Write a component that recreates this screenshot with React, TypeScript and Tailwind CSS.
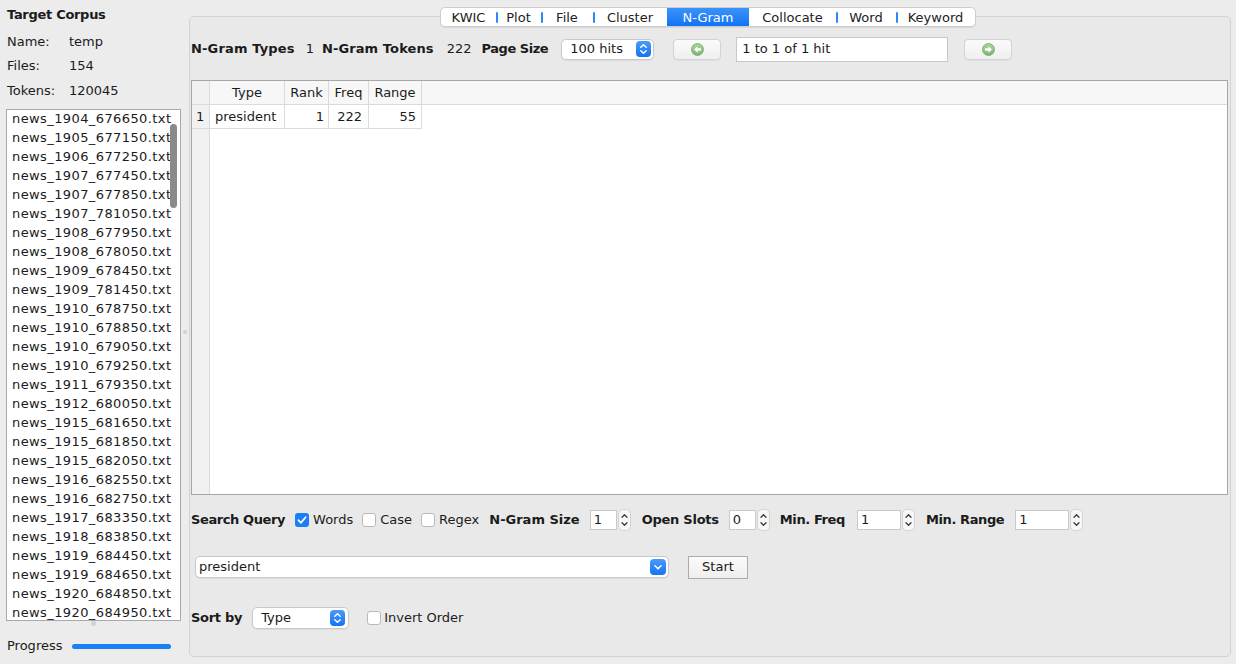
import React from "react";

const files = [
  "news_1904_676650.txt",
  "news_1905_677150.txt",
  "news_1906_677250.txt",
  "news_1907_677450.txt",
  "news_1907_677850.txt",
  "news_1907_781050.txt",
  "news_1908_677950.txt",
  "news_1908_678050.txt",
  "news_1909_678450.txt",
  "news_1909_781450.txt",
  "news_1910_678750.txt",
  "news_1910_678850.txt",
  "news_1910_679050.txt",
  "news_1910_679250.txt",
  "news_1911_679350.txt",
  "news_1912_680050.txt",
  "news_1915_681650.txt",
  "news_1915_681850.txt",
  "news_1915_682050.txt",
  "news_1916_682550.txt",
  "news_1916_682750.txt",
  "news_1917_683350.txt",
  "news_1918_683850.txt",
  "news_1919_684450.txt",
  "news_1919_684650.txt",
  "news_1920_684850.txt",
  "news_1920_684950.txt",
];

const tabs: { label: string; w: string; sep: boolean; active?: boolean }[] = [
  { label: "KWIC", w: "w-[55px]", sep: false },
  { label: "Plot", w: "w-[45px]", sep: true },
  { label: "File", w: "w-[52px]", sep: true },
  { label: "Cluster", w: "w-[74px]", sep: true },
  { label: "N-Gram", w: "w-[82px]", sep: false, active: true },
  { label: "Collocate", w: "w-[87px]", sep: false },
  { label: "Word", w: "w-[60px]", sep: true },
  { label: "Keyword", w: "w-[79px]", sep: true },
];

function BlueStepper() {
  return (
    <svg width="15" height="16" viewBox="0 0 15 16">
      <defs>
        <linearGradient id="bs" x1="0" y1="0" x2="0" y2="1">
          <stop offset="0" stopColor="#4a9bfa" />
          <stop offset="1" stopColor="#1574f2" />
        </linearGradient>
      </defs>
      <rect x="0" y="0" width="15" height="16" rx="4" fill="url(#bs)" />
      <path d="M4.8 6.3 L7.5 3.8 L10.2 6.3" stroke="#fff" strokeWidth="1.5" fill="none" strokeLinecap="round" strokeLinejoin="round" />
      <path d="M4.8 9.7 L7.5 12.2 L10.2 9.7" stroke="#fff" strokeWidth="1.5" fill="none" strokeLinecap="round" strokeLinejoin="round" />
    </svg>
  );
}

function BlueChevron() {
  return (
    <svg width="16" height="16" viewBox="0 0 16 16">
      <defs>
        <linearGradient id="bc" x1="0" y1="0" x2="0" y2="1">
          <stop offset="0" stopColor="#4a9bfa" />
          <stop offset="1" stopColor="#1574f2" />
        </linearGradient>
      </defs>
      <rect x="0" y="0" width="16" height="16" rx="4" fill="url(#bc)" />
      <path d="M5 6.8 L8 9.8 L11 6.8" stroke="#fff" strokeWidth="1.6" fill="none" strokeLinecap="round" strokeLinejoin="round" />
    </svg>
  );
}

function Spinner() {
  return (
    <svg width="13" height="22" viewBox="0 0 13 22">
      <rect x="0.5" y="0.5" width="12" height="21" rx="4" fill="#f7f7f7" stroke="#d2d2d2" />
      <path d="M4 8.3 L6.5 5.8 L9 8.3" stroke="#3a3a3a" strokeWidth="1.3" fill="none" strokeLinecap="round" strokeLinejoin="round" />
      <path d="M4 13.7 L6.5 16.2 L9 13.7" stroke="#3a3a3a" strokeWidth="1.3" fill="none" strokeLinecap="round" strokeLinejoin="round" />
    </svg>
  );
}

function GreenArrow({ dir }: { dir: "left" | "right" }) {
  const pts =
    dir === "left"
      ? "3,6.5 6.6,3.2 6.6,5.2 10,5.2 10,7.8 6.6,7.8 6.6,9.8"
      : "10,6.5 6.4,3.2 6.4,5.2 3,5.2 3,7.8 6.4,7.8 6.4,9.8";
  return (
    <svg width="13" height="13" viewBox="0 0 13 13">
      <defs>
        <linearGradient id={"g" + dir} x1="0" y1="0" x2="0" y2="1">
          <stop offset="0" stopColor="#a9d69e" />
          <stop offset="1" stopColor="#7bb56f" />
        </linearGradient>
      </defs>
      <circle cx="6.5" cy="6.5" r="6" fill={"url(#g" + dir + ")"} stroke="#74a968" strokeWidth="0.8" />
      <polygon points={pts} fill="#fff" />
    </svg>
  );
}

function Check({ checked }: { checked?: boolean }) {
  if (checked) {
    return (
      <svg width="14" height="14" viewBox="0 0 14 14" className="shrink-0">
        <rect x="0" y="0" width="14" height="14" rx="3" fill="#1a7ff6" />
        <path d="M3.4 7.2 L6 9.8 L10.6 4.2" stroke="#fff" strokeWidth="1.8" fill="none" strokeLinecap="round" strokeLinejoin="round" />
      </svg>
    );
  }
  return <div className="w-[14px] h-[14px] shrink-0 rounded-[3px] border border-[#b9b9b9] bg-white" />;
}

function NumField({ value, w }: { value: string; w: string }) {
  return (
    <div className="flex items-center">
      <div className={`${w} h-[20px] bg-white border border-[#c9c9c9] pl-[3px] leading-[18px]`}>{value}</div>
      <div className="ml-[1px] flex">
        <Spinner />
      </div>
    </div>
  );
}

function NavBtn({ dir }: { dir: "left" | "right" }) {
  return (
    <div className="w-[48px] h-[21px] rounded-[4px] border border-[#d3d3d3] bg-gradient-to-b from-[#fbfbfb] to-[#efefef] flex items-center justify-center shadow-[0_1px_0_rgba(0,0,0,0.04)]">
      <GreenArrow dir={dir} />
    </div>
  );
}

export default function App() {
  return (
    <div className="w-[1236px] h-[664px] bg-[#ececec] flex font-['DejaVu_Sans',sans-serif] text-[13px] text-[#1b1b1b] overflow-hidden">
      {/* Left column */}
      <div className="w-[181px] shrink-0 flex flex-col">
        <div className="pl-[7px] pt-[7px] leading-[16px] font-bold tracking-[-0.3px]">Target Corpus</div>
        <div className="mt-[7px] pl-[7px]">
          <div className="h-[24px] flex items-center">
            <span className="w-[62px]">Name:</span>
            <span>temp</span>
          </div>
          <div className="h-[24px] flex items-center">
            <span className="w-[62px]">Files:</span>
            <span>154</span>
          </div>
          <div className="h-[25px] flex items-center">
            <span className="w-[62px]">Tokens:</span>
            <span>120045</span>
          </div>
        </div>
        <div className="relative ml-[6px] mt-[6px] w-[175px] h-[512px] border border-[#a9a9a9] bg-white overflow-hidden">
          <div className="-mt-px">
            {files.map((f) => (
              <div key={f} className="h-[19px] leading-[19px] pl-[5px] whitespace-nowrap tracking-[0.4px]">
                {f}
              </div>
            ))}
          </div>
          <div className="absolute right-[3px] top-[14px] w-[7px] h-[84px] rounded-full bg-[#8a8a8a]" />
        </div>
        <div className="ml-[6px] w-[175px] h-[5px] flex justify-center">
          <div className="w-[5px] h-[5px] rounded-full bg-[#d2d2d2]" />
        </div>
        <div className="mt-[12px] h-[16px] flex items-center pl-[7px]">
          <span>Progress</span>
          <div className="ml-[10px] w-[99px] h-[5px] rounded-full bg-[#1a80f8]" />
        </div>
      </div>

      {/* Divider */}
      <div className="w-[8px] shrink-0 flex items-center justify-center">
        <div className="w-[4px] h-[4px] rounded-full bg-[#d0d0d0]" />
      </div>

      {/* Right panel */}
      <div className="relative mt-[16px] h-[641px] w-[1042px] shrink-0 rounded-[5px] border border-[#d2d2d2] bg-[#e9e9e9] pl-[1px] pr-[2px] pt-[19px] flex flex-col">
        {/* Tabs */}
        <div className="absolute top-[-10px] left-[250px] h-[20px] flex rounded-[5px] bg-white border border-[#cdcdcd] shadow-[0_1px_1px_rgba(0,0,0,0.08)] overflow-hidden">
          {tabs.map((t) => (
            <div
              key={t.label}
              className={`relative ${t.w} h-full flex items-center justify-center leading-none ${
                t.active ? "bg-gradient-to-b from-[#3b93fa] to-[#0d73f3] text-white" : "text-[#222]"
              }`}
            >
              {t.sep && <span className="absolute left-0 top-[4px] w-[2px] h-[11px] rounded-full bg-[#2f86f6]" />}
              {t.label}
            </div>
          ))}
        </div>

        {/* Row 1 */}
        <div className="h-[26px] flex items-center whitespace-nowrap">
          <span className="font-bold tracking-[0.15px]">N-Gram Types</span>
          <span className="ml-[11px]">1</span>
          <span className="ml-[8px] font-bold tracking-[0.1px]">N-Gram Tokens</span>
          <span className="ml-[13px]">222</span>
          <span className="ml-[10px] font-bold tracking-[-0.45px]">Page Size</span>
          <div className="ml-[13px] w-[93px] h-[21px] rounded-[5px] border border-[#c9c9c9] bg-white shadow-[0_1px_1px_rgba(0,0,0,0.06)] flex items-center pl-[8px] pr-[2px]">
            <span className="flex-1">100 hits</span>
            <BlueStepper />
          </div>
          <div className="ml-[19px]">
            <NavBtn dir="left" />
          </div>
          <div className="ml-[15px] w-[212px] h-[25px] bg-white border border-[#c8c8c8] pl-[5px] flex items-center">
            1 to 1 of 1 hit
          </div>
          <div className="ml-[16px]">
            <NavBtn dir="right" />
          </div>
        </div>

        {/* Table */}
        <div className="mt-[18px] h-[415px] border border-[#a6a6a6] bg-white flex flex-col">
          <div className="h-[24px] shrink-0 flex bg-[#f7f7f7] border-b border-[#dadada]">
            <div className="w-[18px] border-r border-[#dadada] bg-[#f1f1f1]" />
            <div className="w-[75px] border-r border-[#dadada] flex items-center justify-center">Type</div>
            <div className="w-[44px] border-r border-[#dadada] flex items-center justify-center">Rank</div>
            <div className="w-[40px] border-r border-[#dadada] flex items-center justify-center">Freq</div>
            <div className="w-[53px] border-r border-[#dadada] flex items-center justify-center">Range</div>
            <div className="flex-1" />
          </div>
          <div className="flex-1 flex">
            <div className="w-[18px] bg-[#f1f1f1] border-r border-[#dadada]">
              <div className="h-[24px] border-b border-[#dadada] flex items-center pl-[4px]">1</div>
            </div>
            <div className="flex-1 bg-white">
              <div className="h-[24px] flex">
                <div className="w-[75px] border-r border-b border-[#dadada] flex items-center pl-[5px]">president</div>
                <div className="w-[44px] border-r border-b border-[#dadada] flex items-center justify-end pr-[4px]">1</div>
                <div className="w-[40px] border-r border-b border-[#dadada] flex items-center justify-end pr-[6px]">222</div>
                <div className="w-[53px] border-r border-b border-[#dadada] flex items-center justify-end pr-[5px]">55</div>
              </div>
            </div>
          </div>
        </div>

        {/* Search row */}
        <div className="mt-[13px] h-[24px] flex items-center whitespace-nowrap">
          <span className="font-bold tracking-[-0.4px]">Search Query</span>
          <div className="ml-[10px] flex items-center">
            <Check checked />
            <span className="ml-[4px]">Words</span>
          </div>
          <div className="ml-[9px] flex items-center">
            <Check />
            <span className="ml-[4px]">Case</span>
          </div>
          <div className="ml-[9px] flex items-center">
            <Check />
            <span className="ml-[4px]">Regex</span>
          </div>
          <span className="ml-[10px] font-bold">N-Gram Size</span>
          <div className="ml-[10px]">
            <NumField value="1" w="w-[27px]" />
          </div>
          <span className="ml-[11px] font-bold tracking-[-0.25px]">Open Slots</span>
          <div className="ml-[10px]">
            <NumField value="0" w="w-[27px]" />
          </div>
          <span className="ml-[10px] font-bold tracking-[-0.4px]">Min. Freq</span>
          <div className="ml-[12px]">
            <NumField value="1" w="w-[44px]" />
          </div>
          <span className="ml-[11px] font-bold tracking-[-0.4px]">Min. Range</span>
          <div className="ml-[11px]">
            <NumField value="1" w="w-[54px]" />
          </div>
        </div>

        {/* Query combo row */}
        <div className="mt-[23px] h-[24px] flex items-center">
          <div className="ml-[4px] w-[474px] h-[22px] rounded-[5px] border border-[#c9c9c9] bg-white shadow-[0_1px_1px_rgba(0,0,0,0.06)] flex items-center pl-[3px] pr-[2px]">
            <span className="flex-1">president</span>
            <BlueChevron />
          </div>
          <div className="ml-[19px] w-[60px] h-[23px] border border-[#ababab] bg-gradient-to-b from-[#fafafa] to-[#efefef] flex items-center justify-center">
            Start
          </div>
        </div>

        {/* Sort row */}
        <div className="mt-[27px] h-[24px] flex items-center whitespace-nowrap">
          <span className="font-bold tracking-[-0.3px]">Sort by</span>
          <div className="ml-[10px] w-[97px] h-[22px] rounded-[5px] border border-[#c9c9c9] bg-white shadow-[0_1px_1px_rgba(0,0,0,0.06)] flex items-center pl-[8px] pr-[3px]">
            <span className="flex-1">Type</span>
            <BlueStepper />
          </div>
          <div className="ml-[18px] flex items-center">
            <Check />
            <span className="ml-[3px]">Invert Order</span>
          </div>
        </div>
      </div>
    </div>
  );
}
